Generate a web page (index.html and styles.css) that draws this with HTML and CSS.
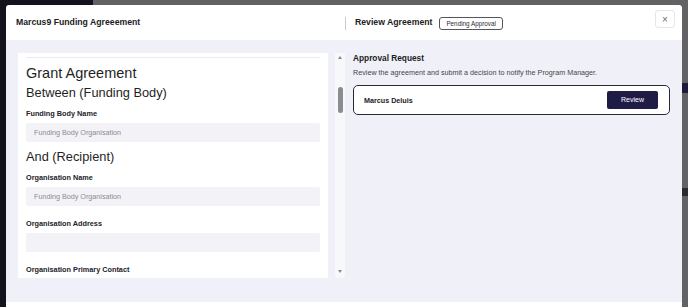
FILE: index.html
```html
<!DOCTYPE html>
<html lang="en">
<head>
<meta charset="utf-8">
<title>Marcus9 Funding Agreement</title>
<link rel="stylesheet" href="styles.css">
</head>
<body>
<div class="modal">
  <header class="modal-header">
    <div class="hdr-left">
      <h1 class="modal-title">Marcus9 Funding Agreeement</h1>
    </div>
    <div class="hdr-right">
      <span class="hdr-divider"></span>
      <h2 class="hdr-sub">Review Agreement</h2>
      <span class="badge">Pending Approval</span>
      <button class="close" type="button" aria-label="Close">×</button>
    </div>
  </header>
  <div class="modal-body">
    <div class="doc-card">
      <div class="doc-rule"></div>
      <h2 class="doc-h1">Grant Agreement</h2>
      <h3 class="doc-h2">Between (Funding Body)</h3>
      <div class="field">
        <label class="field-label">Funding Body Name</label>
        <div class="field-input">Funding Body Organisation</div>
      </div>
      <h3 class="doc-h2 doc-h2-b">And (Recipient)</h3>
      <div class="field">
        <label class="field-label">Organisation Name</label>
        <div class="field-input">Funding Body Organisation</div>
      </div>
      <div class="field">
        <label class="field-label">Organisation Address</label>
        <div class="field-input"></div>
      </div>
      <div class="field">
        <label class="field-label">Organisation Primary Contact</label>
        <div class="field-input"></div>
      </div>
    </div>
    <div class="scrollbar">
      <span class="arrow arrow-up"></span>
      <span class="thumb"></span>
      <span class="arrow arrow-down"></span>
    </div>
    <section class="approval">
      <h3 class="approval-title">Approval Request</h3>
      <p class="approval-desc">Review the agreement and submit a decision to notify the Program Manager.</p>
      <div class="approver">
        <span class="approver-name">Marcus Deluis</span>
        <button class="review-btn" type="button">Review</button>
      </div>
    </section>
  </div>
  <footer class="modal-footer"></footer>
</div>
</body>
</html>
```

FILE: styles.css
```css
* { box-sizing: border-box; }

html, body {
  margin: 0;
  height: 307px;
  overflow: hidden;
}

body {
  padding: 5px 0 0 6px;
  font-family: "Liberation Sans", Arial, sans-serif;
  color: #1f1f24;
  background:
    linear-gradient(#1d1a3c, #1d1a3c) no-repeat right 0 top 83px / 6px 10px,
    linear-gradient(#2a2a30, #2a2a30) no-repeat right 0 top 188px / 6px 8px,
    linear-gradient(to right, #14131d 93px, #626265 93px);
}

.modal {
  width: 676px;
  height: 302px;
  background: #ffffff;
  border-radius: 3px 3px 0 0;
  display: flex;
  flex-direction: column;
  overflow: hidden;
}

/* header */
.modal-header {
  height: 35px;
  display: flex;
  align-items: center;
  flex: none;
}

.hdr-left {
  width: 339px;
  padding-left: 10px;
}

.modal-title, .hdr-sub {
  margin: 0;
  font-size: 8.7px;
  font-weight: 700;
  color: #1c1c22;
  line-height: 11px;
}

.hdr-right {
  flex: 1;
  display: flex;
  align-items: center;
  height: 100%;
  padding-right: 7px;
}

.hdr-divider {
  width: 1px;
  height: 13px;
  background: #c9c9cf;
  margin-top: 1px;
}

.hdr-sub { margin-left: 9px; }

.badge {
  margin-left: 7px;
  margin-top: 1px;
  height: 13px;
  padding: 0 6px;
  border: 1px solid #55555c;
  border-radius: 3px;
  font-size: 6.3px;
  line-height: 11px;
  color: #2b2b30;
  white-space: nowrap;
}

.close {
  margin-left: auto;
  align-self: flex-start;
  margin-top: 5px;
  width: 20px;
  height: 18px;
  padding: 0;
  border: 1px solid #e6e6ea;
  border-radius: 3px;
  background: #ffffff;
  color: #6c6c72;
  font-family: "Liberation Sans", Arial, sans-serif;
  font-size: 10px;
  line-height: 15px;
}

/* body */
.modal-body {
  height: 262px;
  flex: none;
  background: #f0f0f8;
  padding: 13px 12px 24px;
  display: flex;
  align-items: flex-start;
}

.doc-card {
  width: 310px;
  height: 225px;
  flex: none;
  background: #ffffff;
  padding: 4px 8px 0;
  overflow: hidden;
}

.doc-rule {
  height: 1px;
  background: #ececf0;
}

.doc-h1 {
  margin: 6px 0 0;
  font-size: 14.5px;
  font-weight: 400;
  line-height: 18px;
  color: #1f1f24;
}

.doc-h2 {
  margin: 3px 0 0;
  font-size: 12.8px;
  font-weight: 400;
  line-height: 16px;
  color: #1f1f24;
}

.doc-h2-b { margin-top: 7px; }

.field { margin-top: 9px; }
.doc-h2 + .field { margin-top: 8px; }
.field + .field { margin-top: 13px; }

.field-label {
  display: block;
  font-size: 7.3px;
  font-weight: 700;
  line-height: 10px;
  color: #222228;
}

.field-input {
  margin-top: 4px;
  height: 19px;
  background: #f3f3f7;
  border-radius: 2px;
  padding-left: 8px;
  font-size: 7.2px;
  line-height: 19px;
  color: #8c8c92;
}

/* fake scrollbar */
.scrollbar {
  width: 10px;
  height: 225px;
  flex: none;
  margin-left: 7px;
  background: #f8f8fb;
  display: flex;
  flex-direction: column;
  align-items: center;
}

.arrow {
  width: 0;
  height: 0;
  border-left: 2.5px solid transparent;
  border-right: 2.5px solid transparent;
}

.arrow-up {
  margin-top: 3px;
  border-bottom: 3px solid #8a8a8e;
}

.thumb {
  margin-top: 28px;
  width: 5px;
  height: 26px;
  border-radius: 3px;
  background: #8c8c90;
}

.arrow-down {
  margin-top: auto;
  margin-bottom: 5px;
  border-top: 3px solid #8a8a8e;
}

/* approval */
.approval {
  margin-left: 8px;
  flex: 1;
}

.approval-title {
  margin: 0;
  font-size: 8.3px;
  font-weight: 700;
  line-height: 10px;
  color: #1c1c22;
}

.approval-desc {
  margin: 5px 0 0;
  font-size: 7.2px;
  line-height: 10px;
  color: #45454b;
}

.approver {
  margin-top: 7px;
  height: 30px;
  border: 1px solid #2a2a36;
  border-radius: 5px;
  background: #ffffff;
  display: flex;
  align-items: center;
  padding: 0 11px 0 10px;
}

.approver-name {
  font-size: 7.2px;
  font-weight: 700;
  color: #222228;
}

.review-btn {
  margin-left: auto;
  width: 51px;
  height: 18px;
  border: 0;
  border-radius: 2px;
  background: #1f1b47;
  color: #ffffff;
  font-family: "Liberation Sans", Arial, sans-serif;
  font-size: 7px;
  line-height: 18px;
  padding: 0;
}

.modal-footer {
  flex: 1;
  background: #ffffff;
}
```
